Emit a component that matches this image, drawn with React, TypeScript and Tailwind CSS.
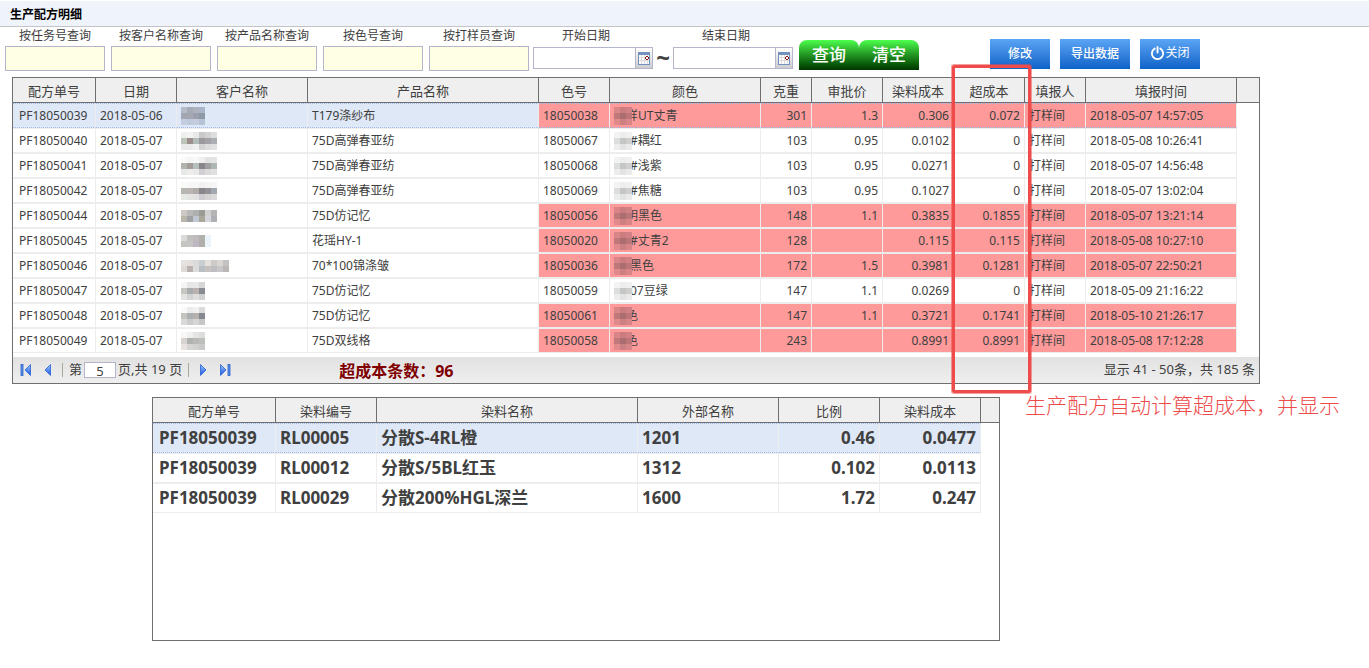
import React from "react";

type Recipe = {
    id: string;
    date: string;
    product: string;
    colorNo: string;
    color: string;
    weight: string;
    price: string;
    dyeCost: string;
    overCost: string;
    time: string;
    tucked?: boolean; // first glyph of the colour is half under the mosaic
};

const recipes: Recipe[] = [
    { id: "PF18050039", date: "2018-05-06", product: "T179涤纱布", colorNo: "18050038", color: "样UT丈青", weight: "301", price: "1.3", dyeCost: "0.306", overCost: "0.072", time: "2018-05-07 14:57:05", tucked: true },
    { id: "PF18050040", date: "2018-05-07", product: "75D高弹春亚纺", colorNo: "18050067", color: "#耦红", weight: "103", price: "0.95", dyeCost: "0.0102", overCost: "0", time: "2018-05-08 10:26:41" },
    { id: "PF18050041", date: "2018-05-07", product: "75D高弹春亚纺", colorNo: "18050068", color: "#浅紫", weight: "103", price: "0.95", dyeCost: "0.0271", overCost: "0", time: "2018-05-07 14:56:48" },
    { id: "PF18050042", date: "2018-05-07", product: "75D高弹春亚纺", colorNo: "18050069", color: "#焦糖", weight: "103", price: "0.95", dyeCost: "0.1027", overCost: "0", time: "2018-05-07 13:02:04" },
    { id: "PF18050044", date: "2018-05-07", product: "75D仿记忆", colorNo: "18050056", color: "明黑色", weight: "148", price: "1.1", dyeCost: "0.3835", overCost: "0.1855", time: "2018-05-07 13:21:14", tucked: true },
    { id: "PF18050045", date: "2018-05-07", product: "花瑶HY-1", colorNo: "18050020", color: "#丈青2", weight: "128", price: "", dyeCost: "0.115", overCost: "0.115", time: "2018-05-08 10:27:10" },
    { id: "PF18050046", date: "2018-05-07", product: "70*100锦涤皱", colorNo: "18050036", color: "黑色", weight: "172", price: "1.5", dyeCost: "0.3981", overCost: "0.1281", time: "2018-05-07 22:50:21" },
    { id: "PF18050047", date: "2018-05-07", product: "75D仿记忆", colorNo: "18050059", color: "07豆绿", weight: "147", price: "1.1", dyeCost: "0.0269", overCost: "0", time: "2018-05-09 21:16:22" },
    { id: "PF18050048", date: "2018-05-07", product: "75D仿记忆", colorNo: "18050061", color: "色", weight: "147", price: "1.1", dyeCost: "0.3721", overCost: "0.1741", time: "2018-05-10 21:26:17", tucked: true },
    { id: "PF18050049", date: "2018-05-07", product: "75D双线格", colorNo: "18050058", color: "色", weight: "243", price: "", dyeCost: "0.8991", overCost: "0.8991", time: "2018-05-08 17:12:28", tucked: true },
];

// Mosaic blocks for the hidden customer names, one array of greys per line
const customerMosaic: string[][][] = [
    [["#b4bcca", "#a5aab4", "#abb1bd", "#a9b5c9"], ["#a3a7b3", "#a4a6b1", "#9b9fab", "#8f98a6"], ["#c3cddf", "#bfc9dc", "#c3cddd", "#b6c2d6"]],
    [["#eeeeec", "#f3f3f1", "#e9e9e9", "#c9c9c9", "#d2d2d2", "#dedede"], ["#bfc4b8", "#9d8f8e", "#b2bcb9", "#9c999e", "#a5a2a7", "#abaeb2"], ["#e8ebe8", "#eaeaea", "#f1f1f1", "#d5d2d5", "#dcdcdc", "#e1e1e1"]],
    [["#fafafa", "#f5f5f5", "#f7f7f7", "#efefef", "#e2e2e2", "#e4e4e4"], ["#b2b5ad", "#a39c99", "#b5c0bc", "#89858a", "#a09fa1", "#adb8b5"], ["#e6e9e6", "#ededeb", "#e9e9e9", "#d2cfd4", "#dadada", "#e0e0e0"]],
    [["#fafafa", "#f7f7f7", "#f7f7f7", "#f2f0f2", "#f4f4f4", "#f6f6f6"], ["#b5b7b0", "#bab5b3", "#b0acaa", "#89858a", "#949297", "#a1a8b0"], ["#e6e9e6", "#e4e4e2", "#e1e1e1", "#cfccd1", "#d4d4d4", "#dadada"]],
    [["#cbc8c6", "#b9b9b9", "#adafb1", "#9a9b93", "#d1d1d1", "#b5b5b7"], ["#b9b6ab", "#9fa0a3", "#bfc7d3", "#aaa79b", "#d5d6d9", "#aeb0b5"]],
    [["#dbdcda", "#c0c0be", "#c0b9bd", "#b1b1ab", "#ecf4fb"], ["#c4c4c0", "#c8c6c2", "#bfb8c2", "#afafac", "#ecf4fb"]],
    [["#e5e2e0", "#e3e0df", "#dcdad9", "#c9cfd1", "#e4e0de", "#cccbc9", "#d9d6d4", "#c4c1c1"], ["#dedad8", "#b9b2b0", "#dcdcdc", "#b9bec4", "#c7c1c0", "#bfbcc2", "#c8c6c7", "#bcb6b6"]],
    [["#f5f5f5", "#e6e6e4", "#e8e8e8", "#d5d7d7"], ["#c7c7c1", "#a8acac", "#b9b2b0", "#898b92"], ["#e3e3e1", "#d3d3d3", "#dededc", "#d0d0d0"]],
    [["#fafafa", "#ebecee", "#f1f1f1", "#dadcdc"], ["#c5c5bf", "#abafb0", "#b6b0ae", "#86888f"], ["#d9d9d7", "#cbcbcb", "#d5d5d3", "#c5c7c7"]],
    [["#f7f7f7", "#f0f0f0", "#e4e4e4", "#dcdedc"], ["#d6d3d1", "#b0b2b0", "#b9b9b7", "#bdbfbd"], ["#eae2e0", "#d6d5d3", "#d1d1cf", "#c8cac8"]],
];

const redMosaic = [["#d98486", "#ca7c7e", "#d18183"], ["#c0787a", "#ab6d70", "#bd7678"], ["#e08a8c", "#cd8082", "#d98587"]];
const greyMosaic = [["#f3f3f3", "#ededed", "#f0f0f0"], ["#dcdedc", "#c4c6c6", "#cfcfcd"], ["#ededed", "#e2e4e4", "#eaeaea"]];

const dyes = [
    { id: "PF18050039", code: "RL00005", name: "分散S-4RL橙", ext: "1201", ratio: "0.46", cost: "0.0477" },
    { id: "PF18050039", code: "RL00012", name: "分散S/5BL红玉", ext: "1312", ratio: "0.102", cost: "0.0113" },
    { id: "PF18050039", code: "RL00029", name: "分散200%HGL深兰", ext: "1600", ratio: "1.72", cost: "0.247" },
];

const Mosaic = ({ rows }: { rows: string[][] }) => (
    <svg className="relative z-10 block shrink-0" width={rows[0].length * 6} height={rows.length * 6} shapeRendering="crispEdges" aria-hidden="true">
        {rows.map((row, y) => row.map((c, x) => <rect key={`${x}-${y}`} x={x * 6} y={y * 6} width="6" height="6" fill={c} />))}
    </svg>
);

const CalendarIcon = () => (
    <svg width="12" height="13" viewBox="0 0 12 13" shapeRendering="crispEdges" aria-hidden="true">
        <rect width="12" height="13" fill="#7391bf" />
        <rect x="1" y="3" width="10" height="9" fill="#fff" />
        <path d="M1 5.5h10M1 8.5h10M3.5 3v9M6.5 3v9M9.5 3v9" stroke="#dcdcdc" />
        <path d="M8 4h2v1h1v2h-1v1h-2v-1h-1v-2h1z" fill="#8b1010" />
        <rect x="8" y="5" width="2" height="2" fill="#fff" />
    </svg>
);

const SearchField = ({ id, label }: { id: string; label: string }) => (
    <div className="flex w-[100px] flex-col text-center">
        <label htmlFor={id} className="h-[19px] leading-[17px]">{label}</label>
        <input id={id} type="text" className="h-[25px] w-full border border-[#b5b5cb] bg-[#ffffe3] px-1 outline-none" />
    </div>
);

const DateField = ({ id, label }: { id: string; label: string }) => (
    <div className="flex w-[120px] flex-col">
        <label htmlFor={id} className="h-5 pr-3.5 text-center leading-[17px]">{label}</label>
        <div className="flex h-[22px] border border-[#b5b5cb]">
            <input id={id} type="text" className="w-0 flex-1 px-1 outline-none" />
            <button type="button" aria-label={label} className="flex w-[17px] items-center justify-center border-l border-[#b5b5cb] bg-linear-to-b from-white to-[#cdcdcf]">
                <CalendarIcon />
            </button>
        </div>
    </div>
);

const PageButton = ({ label, left, bar }: { label: string; left?: boolean; bar?: boolean }) => (
    <button type="button" aria-label={label} className="flex h-5 w-5 items-center justify-center">
        <svg width="12" height="12" viewBox="0 0 12 12" className={left ? "" : "-scale-x-100"} aria-hidden="true">
            <defs>
                <linearGradient id="arrow" x1="0" y1="0" x2="0" y2="1">
                    <stop offset="0" stopColor="#9cc6fb" />
                    <stop offset="1" stopColor="#1d52e0" />
                </linearGradient>
            </defs>
            {bar && <rect x="1" y=".5" width="2" height="11" fill="#5b92ea" stroke="#2a5fc8" strokeWidth=".8" />}
            <path d="M10.500 .5v11L5 6z" fill="url(#arrow)" stroke="#2a63d6" strokeWidth=".8" />
        </svg>
    </button>
);

const th = "h-[25px] border-r border-b border-[#6f6f6f] bg-[#efefef] px-0 pt-0.5 pb-0 text-center leading-[22px] font-normal";

const RecipeGrid = () => (
    <section className="relative mr-[109px] ml-3 border border-[#6f6f6f]">
        <table className="w-full table-fixed border-separate border-spacing-0">
            <colgroup>
                <col className="w-[83px]" />
                <col className="w-[81px]" />
                <col className="w-[131px]" />
                <col className="w-[231px]" />
                <col className="w-[71px]" />
                <col className="w-[151px]" />
                <col className="w-[51px]" />
                <col className="w-[71px]" />
                <col className="w-[71px]" />
                <col className="w-[71px]" />
                <col className="w-[61px]" />
                <col className="w-[151px]" />
                <col />
            </colgroup>
            <thead className="text-[13px]">
                <tr>
                    {["配方单号", "日期", "客户名称", "产品名称", "色号", "颜色", "克重", "审批价", "染料成本", "超成本", "填报人", "填报时间"].map((h) => (
                        <th key={h} className={th}>{h}</th>
                    ))}
                    <td className="border-b border-[#6f6f6f] bg-[#efefef] p-0" />
                </tr>
            </thead>
            <tbody>
                {recipes.map((r, i) => {
                    const over = r.overCost !== "0";
                    const line = i === 0 ? "border-y border-r border-y-[#a3b9e6] border-r-[#ededed] [border-top-style:dotted] [border-bottom-style:dotted]" : "border-y border-r border-[#ededed]";
                    const base = `h-[25px] overflow-hidden whitespace-nowrap px-1 py-0 leading-[23px] first:pl-1.5 ${line}`;
                    const plain = `${base} ${i === 0 ? "bg-[#dfe8f6]" : ""}`;
                    const cell = `${base} ${over ? "bg-[#ff9a9a]" : ""}`;
                    return (
                        <tr key={r.id}>
                            <td className={plain}>{r.id}</td>
                            <td className={plain}>{r.date}</td>
                            <td className={plain}><Mosaic rows={customerMosaic[i]} /></td>
                            <td className={plain}>{r.product}</td>
                            <td className={cell}>{r.colorNo}</td>
                            <td className={cell}>
                                <div className="flex items-center">
                                    <Mosaic rows={over ? redMosaic : greyMosaic} />
                                    <span className={r.tucked ? "-ml-1.5" : "-ml-0.5"}>{r.color}</span>
                                </div>
                            </td>
                            <td className={`${cell} text-right`}>{r.weight}</td>
                            <td className={`${cell} text-right`}>{r.price}</td>
                            <td className={`${cell} text-right`}>{r.dyeCost}</td>
                            <td className={`${cell} text-right`}>{r.overCost}</td>
                            <td className={cell}>打样间</td>
                            <td className={cell}>{r.time}</td>
                            <td className="p-0" />
                        </tr>
                    );
                })}
            </tbody>
        </table>
        <footer className="mt-1 flex h-[26px] items-center bg-linear-to-b from-[#e2e2e2] to-[#efefef] pr-1 pl-[3px] text-[13px]">
            <PageButton label="首页" left bar />
            <PageButton label="上一页" left />
            <div className="mx-1.5 h-3.5 w-px bg-[#aca899]" />
            <label htmlFor="page">第</label>
            <input id="page" type="text" defaultValue="5" className="mx-0.5 h-4 w-8 border border-[#b5b5cb] bg-white pt-1 text-center outline-none" />
            <span>页,共 19 页</span>
            <div className="mx-1.5 h-3.5 w-px bg-[#aca899]" />
            <PageButton label="下一页" />
            <PageButton label="末页" bar />
            <strong className="ml-[104px] pt-0.5 text-base text-[#800000]">超成本条数：96</strong>
            <span className="ml-auto">显示 41 - 50条，共 185 条</span>
        </footer>
        {/* marker around the over-cost column */}
        <div className="pointer-events-none absolute -top-[13px] left-[939px] h-[328px] w-[79px] rounded-xs border-[3px] border-[#ee4b4b] shadow-[0_0_0_1px_#ee4b4b88]" />
    </section>
);

const DyeGrid = () => (
    <section className="h-[244px] w-[848px] shrink-0 border border-[#6f6f6f]">
        <table className="w-full table-fixed border-separate border-spacing-0">
            <colgroup>
                <col className="w-[123px]" />
                <col className="w-[101px]" />
                <col className="w-[261px]" />
                <col className="w-[141px]" />
                <col className="w-[101px]" />
                <col className="w-[101px]" />
                <col />
            </colgroup>
            <thead className="text-[13px]">
                <tr>
                    {["配方单号", "染料编号", "染料名称", "外部名称", "比例", "染料成本"].map((h) => (
                        <th key={h} className={th}>{h}</th>
                    ))}
                    <td className="border-b border-[#6f6f6f] bg-[#efefef] p-0" />
                </tr>
            </thead>
            <tbody className="text-[17px] font-bold">
                {dyes.map((d, i) => {
                    const cell = `h-[30px] whitespace-nowrap py-0 px-1 leading-7 first:pl-1.5 border-y border-r ${i === 0 ? "bg-[#dfe8f6] border-y-[#a3b9e6] border-r-[#ededed] [border-top-style:dotted] [border-bottom-style:dotted]" : "border-[#ededed]"}`;
                    return (
                        <tr key={d.code}>
                            <td className={cell}>{d.id}</td>
                            <td className={cell}>{d.code}</td>
                            <td className={cell}>{d.name}</td>
                            <td className={cell}>{d.ext}</td>
                            <td className={`${cell} text-right`}>{d.ratio}</td>
                            <td className={`${cell} text-right`}>{d.cost}</td>
                            <td className="p-0" />
                        </tr>
                    );
                })}
            </tbody>
        </table>
    </section>
);

const greenButton = "h-[30px] w-[60px] rounded-t-lg bg-linear-to-b from-[#4dff4d] to-[#003800] text-[17px] font-medium text-white";
const blueButton = "flex h-[30px] items-center justify-center bg-linear-to-b from-[#5ba5f5] to-[#0a62c8] text-xs text-white";

export default function App() {
    return (
        <main className="min-h-screen bg-white font-['Noto_Sans','Noto_Sans_CJK_SC',sans-serif] text-xs text-[#404040]">
            <h1 className="mt-px h-[26px] border-b border-[#c4c4c8] bg-[#eff4fb] pl-2.5 text-xs leading-7 font-bold text-black">生产配方明细</h1>
            <form className="flex h-[50px] items-start pl-[5px]" onSubmit={(e) => e.preventDefault()}>
                <div className="flex gap-1.5">
                    <SearchField id="task" label="按任务号查询" />
                    <SearchField id="customer" label="按客户名称查询" />
                    <SearchField id="product" label="按产品名称查询" />
                    <SearchField id="color" label="按色号查询" />
                    <SearchField id="sampler" label="按打样员查询" />
                </div>
                <div className="ml-1 flex">
                    <DateField id="start" label="开始日期" />
                    <span className="w-5 pt-[18px] text-center text-2xl leading-6 font-bold">~</span>
                    <DateField id="end" label="结束日期" />
                </div>
                <div className="mt-[13px] ml-1.5 flex">
                    <button type="submit" className={greenButton}>查询</button>
                    <button type="reset" className={greenButton}>清空</button>
                </div>
                <div className="mt-3 ml-[71px] flex gap-2.5">
                    <button type="button" className={`${blueButton} w-[60px] font-medium`}>修改</button>
                    <button type="button" className={`${blueButton} w-[70px] font-medium`}>导出数据</button>
                    <button type="button" className={`${blueButton} w-[60px] pb-0.5`}>
                        <svg width="15" height="16" viewBox="0 0 16 16" fill="none" stroke="#fff" strokeWidth="2" strokeLinecap="round" aria-hidden="true">
                            <path d="M8 1.500v6M5 3.300a6 6 0 1 0 6 0" />
                        </svg>
                        关闭
                    </button>
                </div>
            </form>
            <RecipeGrid />
            <div className="mt-[13px] ml-[152px] flex items-start">
                <DyeGrid />
                <p className="-mt-1.5 ml-[25px] whitespace-nowrap text-[21px] leading-7 font-light text-[#ee4b4b]">生产配方自动计算超成本，并显示</p>
            </div>
        </main>
    );
}
